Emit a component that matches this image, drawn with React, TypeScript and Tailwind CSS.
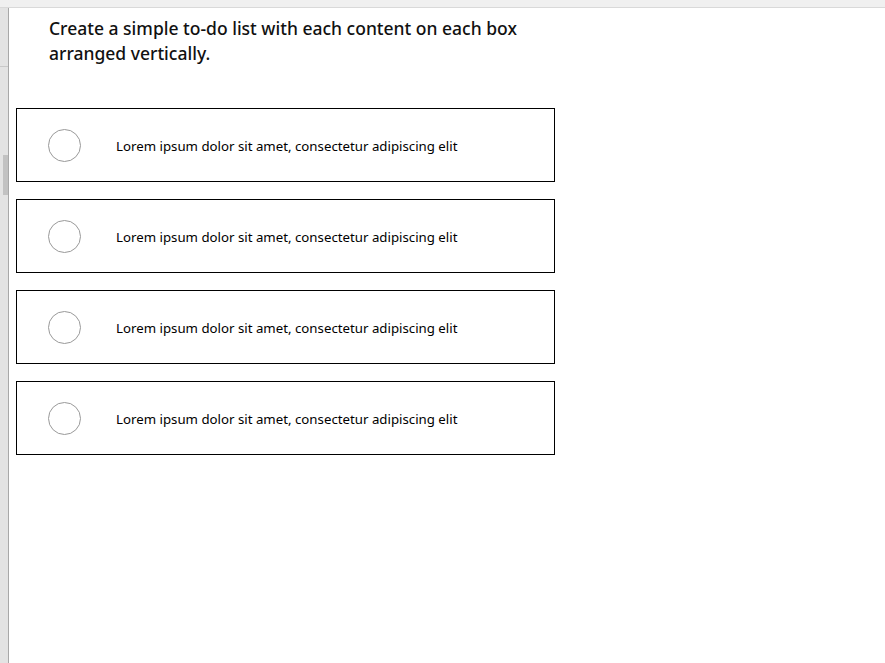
import React from 'react';

const items = [
   'Lorem ipsum dolor sit amet, consectetur adipiscing elit',
   'Lorem ipsum dolor sit amet, consectetur adipiscing elit',
   'Lorem ipsum dolor sit amet, consectetur adipiscing elit',
   'Lorem ipsum dolor sit amet, consectetur adipiscing elit',
];

const App: React.FC = () => {
   return (
      <div className="flex flex-col w-[885px] h-[663px] bg-white overflow-hidden" style={{ fontFamily: '"Noto Sans", "Open Sans", sans-serif' }}>
         <div className="h-[8px] shrink-0 bg-[#f0f0f0] border-b border-[#d9d9d9]"></div>
         <div className="flex flex-1">
            {/* side strip */}
            <div className="w-[9px] shrink-0 flex flex-col bg-[#e3e3e3] border-r border-[#a8a8a8]">
               <div className="h-[59px] border-b border-[#c8c8c8]"></div>
               <div className="h-[88px]"></div>
               <div className="h-[40px] ml-[3px] bg-[#c2c2c2]"></div>
            </div>

            <main className="flex-1 pl-[7px] pt-[8px]">
               <h1 className="ml-[33px] w-[490px] text-[17.5px] font-medium leading-[25px] text-[#111]">
                  Create a simple to-do list with each content on each box arranged vertically.
               </h1>

               <ul className="mt-[42px] flex flex-col gap-[17px]">
                  {items.map((text, i) => (
                     <li key={i} className="w-[539px] h-[74px] border border-black flex items-center">
                        <span className="ml-[31px] size-[33px] rounded-full border border-[#999] shrink-0"></span>
                        <span className="ml-[35px] pt-[3px] text-[13.25px] text-black">{text}</span>
                     </li>
                  ))}
               </ul>
            </main>
         </div>
      </div>
   );
};

export default App;
